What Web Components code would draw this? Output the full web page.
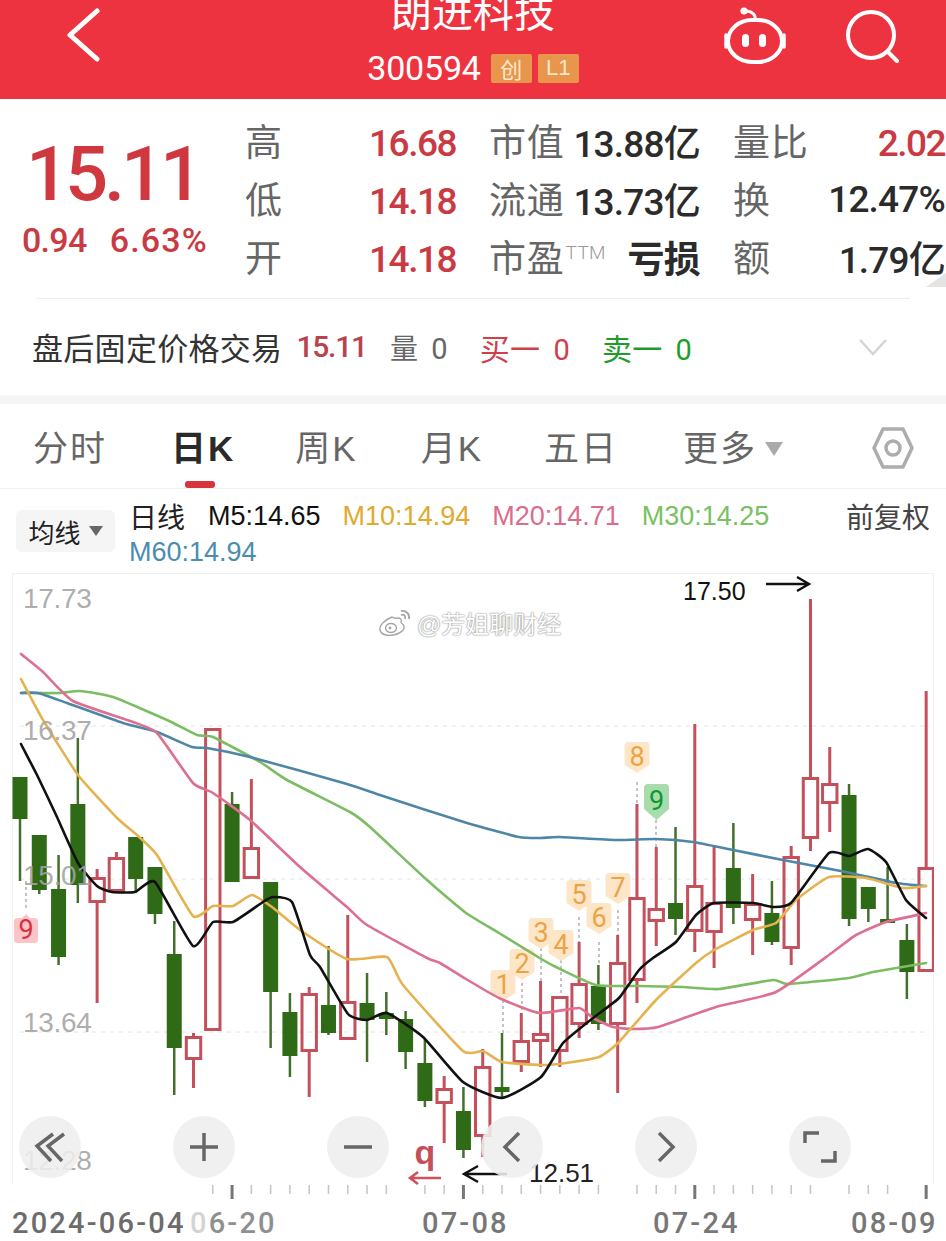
<!DOCTYPE html>
<html lang="zh">
<head>
<meta charset="utf-8">
<title>朗进科技 300594</title>
<style>
html, body { margin: 0; padding: 0; background: #fff; }
body { width: 946px; height: 1241px; overflow: hidden; font-family: "Liberation Sans", "Noto Sans CJK SC", sans-serif; }
sup { font: 300 19px/1 Roboto, sans-serif; color: #999; vertical-align: 13px; margin-left: 1px; letter-spacing: .3px; }
</style>
</head>
<body>
<stock-header>
  <span slot="name">朗进科技</span>
  <span slot="code">300594</span>
</stock-header>

<quote-panel>
  <quote-cell tone="up"><span slot="label">高</span>16.68</quote-cell>
  <quote-cell><span slot="label">市值</span>13.88亿</quote-cell>
  <quote-cell tone="up"><span slot="label">量比</span>2.02</quote-cell>
  <quote-cell tone="up"><span slot="label">低</span>14.18</quote-cell>
  <quote-cell><span slot="label">流通</span>13.73亿</quote-cell>
  <quote-cell><span slot="label">换</span>12.47%</quote-cell>
  <quote-cell tone="up"><span slot="label">开</span>14.18</quote-cell>
  <quote-cell strong><span slot="label">市盈<sup>TTM</sup></span>亏损</quote-cell>
  <quote-cell><span slot="label">额</span>1.79亿</quote-cell>
</quote-panel>

<after-hours></after-hours>

<period-tabs>
  <period-tab style="margin-right:1px">分时</period-tab>
  <period-tab active style="margin-right:-3px">日K</period-tab>
  <period-tab>周K</period-tab>
  <period-tab style="margin-right:-2px">月K</period-tab>
  <period-tab style="margin-right:2px">五日</period-tab>
  <period-tab menu>更多</period-tab>
</period-tabs>

<ma-legend></ma-legend>
<kline-chart></kline-chart>
<date-axis></date-axis>

<script>
const SANS = '"Liberation Sans", "Noto Sans CJK SC", sans-serif';
const NUM = 'Roboto, "Noto Sans CJK SC", sans-serif';

class StockHeader extends HTMLElement {
    constructor() {
        super();
        this.attachShadow({ mode: 'open' });
    }
    connectedCallback() {
        this.shadowRoot.innerHTML = `
            <style>
                :host { display: grid; grid-template-columns: 1fr auto 1fr; height: 99px; background: #ee3340; color: #fff; overflow: hidden; font-family: ${SANS}; }
                .left { padding: 8px 0 0 66px; }
                .mid { display: flex; flex-direction: column; align-items: center; }
                .name { font-size: 41px; line-height: 44px; margin-top: -9px; }
                .sub { display: flex; align-items: center; height: 32px; margin-top: 17px; }
                .code { font: 34px/32px Roboto, sans-serif; letter-spacing: -.2px; margin-right: 10px; }
                .tag { display: flex; align-items: center; justify-content: center; width: 41px; height: 29px; margin-right: 6px; background: #e9964d; color: #fbe7c9; font-size: 22px; border-radius: 2px; }
                .tag:last-child { margin-right: 0; }
                .right { display: flex; justify-content: flex-end; gap: 59px; padding: 6px 47px 0 0; }
                svg { display: block; fill: none; stroke: #fff; stroke-linecap: round; stroke-linejoin: round; }
            </style>
            <div class="left">
                <svg width="34" height="54" viewBox="0 0 34 54" stroke-width="5"><path d="M31 3 4 27l27 24"/></svg>
            </div>
            <div class="mid">
                <div class="name"><slot name="name"></slot></div>
                <div class="sub"><span class="code"><slot name="code"></slot></span><span class="tag">创</span><span class="tag">L1</span></div>
            </div>
            <div class="right">
                <svg width="62" height="58" viewBox="0 0 62 58" stroke-width="4">
                    <rect x="4" y="14" width="54" height="42" rx="24" ry="21"/>
                    <path d="M2 29v12M60 29v12" stroke-width="3.5"/>
                    <path d="M31 14c1-5-2-8-8-9" stroke-width="3"/>
                    <circle cx="20" cy="5" r="3.6" fill="#fff" stroke="none"/>
                    <rect x="18" y="28" width="7" height="13" rx="3.5" fill="#fff" stroke="none"/>
                    <rect x="35" y="28" width="7" height="13" rx="3.5" fill="#fff" stroke="none"/>
                </svg>
                <svg width="54" height="58" viewBox="0 0 54 58" stroke-width="4">
                    <circle cx="26" cy="29" r="23"/>
                    <path d="M43 46l9 9"/>
                </svg>
            </div>`;
    }
}

class QuoteCell extends HTMLElement {
    constructor() {
        super();
        this.attachShadow({ mode: 'open' });
    }
    connectedCallback() {
        const up = this.getAttribute('tone') === 'up';
        const strong = this.hasAttribute('strong');
        this.shadowRoot.innerHTML = `
            <style>
                :host { display: flex; justify-content: space-between; align-items: center; height: 58px; font-family: ${SANS}; }
                .l { font-size: 37px; color: #666; white-space: nowrap; margin: -7px 0 0 -2px; }
                ::slotted(span) { letter-spacing: .8px; }
                .v { font: ${strong ? 700 : 500} 37px ${NUM}; letter-spacing: ${up ? -1.5 : -.8}px; color: ${up ? '#c93a43' : '#2b2b2b'}; white-space: nowrap; margin-top: ${up ? 0 : -4}px; }
            </style>
            <span class="l"><slot name="label"></slot></span>
            <span class="v"><slot></slot></span>`;
    }
}

class QuotePanel extends HTMLElement {
    constructor() {
        super();
        this.attachShadow({ mode: 'open' });
    }
    connectedCallback() {
        this.shadowRoot.innerHTML = `
            <style>
                :host { display: block; position: relative; height: 199px; font-family: ${SANS}; }
                .top { display: flex; padding-top: 15px; }
                .price { width: 247px; flex: none; color: #d0383f; }
                .big { font: 500 76px/76px Roboto, sans-serif; letter-spacing: -4.2px; margin: 22px 0 0 26px; }
                .sub { display: flex; gap: 23px; font: 500 34px/40px Roboto, sans-serif; margin: 8px 0 0 22px; color: #c93a43; letter-spacing: -.7px; }
                .sub span:last-child { letter-spacing: 1.2px; }
                .grid { display: grid; grid-template-columns: 209px 209px 210px; column-gap: 35px; }
                .rule { height: 1px; background: #eeeeee; margin: 10px 36px 0 36px; }
                .corner { position: absolute; right: 0; bottom: 11px; width: 0; height: 0; border-left: 20px solid transparent; border-bottom: 14px solid #e4e4e4; }
            </style>
            <div class="top">
                <div class="price">
                    <div class="big">15.11</div>
                    <div class="sub"><span>0.94</span><span>6.63%</span></div>
                </div>
                <div class="grid"><slot></slot></div>
            </div>
            <div class="rule"></div>
            <div class="corner"></div>`;
    }
}

class AfterHours extends HTMLElement {
    constructor() {
        super();
        this.attachShadow({ mode: 'open' });
    }
    connectedCallback() {
        this.shadowRoot.innerHTML = `
            <style>
                :host { display: flex; align-items: center; height: 106px; box-sizing: border-box; padding: 0 0 0 32px; border-bottom: 9px solid #f5f5f5; font: 31px ${SANS}; color: #333; letter-spacing: .3px; }
                span { white-space: nowrap; }
                b { font: 400 29px Roboto, sans-serif; letter-spacing: -.8px; margin-left: 13px; }
                .p { color: #b9434d; font: 500 30px Roboto, sans-serif; letter-spacing: -1.2px; margin-left: 14px; }
                .q { color: #666; font-size: 28px; margin-left: 23px; }
                .r { color: #d0404b; font-size: 30px; margin-left: 33px; }
                .g { color: #1f9d2c; font-size: 30px; margin-left: 33px; }
                svg { margin-left: auto; margin-right: 58px; display: block; }
            </style>
            <span>盘后固定价格交易</span>
            <span class="p">15.11</span>
            <span class="q">量<b>0</b></span>
            <span class="r">买一<b>0</b></span>
            <span class="g">卖一<b>0</b></span>
            <svg width="30" height="18" viewBox="0 0 30 18" fill="none" stroke="#d5d5d5" stroke-width="2.5"><path d="M2 2l13 14L28 2"/></svg>`;
    }
}

class PeriodTab extends HTMLElement {
    constructor() {
        super();
        this.attachShadow({ mode: 'open' });
    }
    connectedCallback() {
        const active = this.hasAttribute('active');
        const menu = this.hasAttribute('menu');
        this.shadowRoot.innerHTML = `
            <style>
                :host { display: flex; flex-direction: column; align-items: center; height: 84px; font: ${active ? 700 : 400} 35px ${SANS}; color: ${active ? '#2a2a2a' : '#666'}; letter-spacing: 2px; }
                .t { margin-top: 21px; line-height: 48px; display: flex; align-items: center; }
                .caret { width: 0; height: 0; margin-left: 8px; border: 9px solid transparent; border-top: 14px solid #aaa; border-bottom: 0; }
                .bar { width: 30px; height: 7px; margin: auto 6px 0 0; border-radius: 3px; background: ${active ? '#d8343f' : 'transparent'}; }
            </style>
            <div class="t"><slot></slot>${menu ? '<span class="caret"></span>' : ''}</div>
            <div class="bar"></div>`;
    }
}

class PeriodTabs extends HTMLElement {
    constructor() {
        super();
        this.attachShadow({ mode: 'open' });
    }
    connectedCallback() {
        this.shadowRoot.innerHTML = `
            <style>
                :host { display: flex; gap: 63px; height: 85px; box-sizing: border-box; padding-left: 33px; border-bottom: 1px solid #f0f0f0; }
                svg { margin: 22px 32px 0 auto; display: block; }
            </style>
            <slot></slot>
            <svg width="42" height="44" viewBox="0 0 42 44" fill="none" stroke="#adadad" stroke-width="3.5" stroke-linejoin="round">
                <path d="M11 3h20l9 19-9 19H11L2 22Z"/>
                <circle cx="21" cy="22" r="7"/>
            </svg>`;
    }
}

class MaLegend extends HTMLElement {
    constructor() {
        super();
        this.attachShadow({ mode: 'open' });
    }
    connectedCallback() {
        this.shadowRoot.innerHTML = `
            <style>
                :host { display: flex; height: 84px; padding: 9px 16px 0 16px; box-sizing: border-box; font: 27px ${SANS}; color: #222; }
                .drop { display: flex; align-items: center; justify-content: center; gap: 8px; flex: none; width: 99px; height: 42px; margin: 12px 14px 0 0; background: #f5f5f5; border-radius: 6px; font-size: 26px; }
                .drop i { width: 0; height: 0; border: 7px solid transparent; border-top: 10px solid #666; border-bottom: 0; }
                .rows { flex: 1; display: flex; flex-direction: column; }
                .row { display: flex; gap: 22px; height: 36px; align-items: center; white-space: nowrap; }
                .row .name { font-size: 28px; margin-right: 1px; }
                .m5 { color: #111; } .m10 { color: #e0a92f; } .m20 { color: #db6d8c; } .m30 { color: #79c162; } .m60 { color: #4a8db0; }
                .right { margin-left: auto; font-size: 28px; color: #444; }
            </style>
            <div class="drop">均线<i></i></div>
            <div class="rows">
                <div class="row">
                    <span class="name">日线</span>
                    <span class="m5">M5:14.65</span>
                    <span class="m10">M10:14.94</span>
                    <span class="m20">M20:14.71</span>
                    <span class="m30">M30:14.25</span>
                    <span class="right">前复权</span>
                </div>
                <div class="row"><span class="m60">M60:14.94</span></div>
            </div>`;
    }
}

// top, bottom, high, low (page y), 'u' red hollow / 'd' green solid
const CANDLES = [
    ['d',777,819,777,881],['d',835,890,835,894],['d',889,957,855,965],['d',804,885,738,903],
    ['u',877,903,869,1003],['u',857,892,852,892],['d',837,879,837,893],['d',867,914,867,924],
    ['d',954,1048,921,1095],['u',1036,1060,1033,1088],['u',728,1031,728,1031],['d',804,882,792,882],
    ['u',847,879,779,879],['d',882,992,882,1048],['d',1012,1056,993,1077],['u',993,1052,987,1097],
    ['d',1005,1033,946,1035],['u',1001,1040,915,1040],['d',1003,1020,973,1062],['d',1013,1019,992,1035],
    ['d',1019,1052,1011,1069],['d',1063,1101,1038,1107],['u',1088,1104,1076,1143],['d',1111,1150,1087,1158],
    ['u',1066,1137,1049,1157],['d',1087,1092,1033,1097],['u',1040,1063,1013,1072],['u',1033,1042,981,1067],
    ['u',996,1052,996,1067],['u',983,1025,942,1038],['d',986,1024,965,1030],['u',962,1025,935,1093],
    ['u',897,981,804,1003],['u',908,922,847,946],['d',903,919,827,935],['u',885,932,724,952],
    ['u',902,933,847,968],['d',868,908,823,924],['u',903,921,874,955],['d',913,942,881,945],
    ['u',856,949,846,965],['u',777,839,599,851],['u',783,804,747,832],['d',795,919,784,926],
    ['d',887,909,887,922],['d',919,923,867,923],['d',940,972,924,999],['u',867,972,691,972]
];

const MA_LINES = [
    ['#7cbc62', '21,693 60,693 80,691 113,697 167,720 197,735 213,737 260,762 287,780 350,812 370,827 427,880 466,913 499,933 543,960 556,967 596,985 639,986 683,987 719,989 773,980 788,984 849,978 873,972 926,963'],
    ['#4d86a6', '21,693 38,693 67,703 123,723 157,732 192,747 207,748 250,757 347,784 383,796 467,823 519,837 541,838 559,837 616,840 656,839 693,842 733,850 783,860 846,872 896,883 926,886'],
    ['#dd7090', '21,654 43,672 73,701 133,722 157,733 193,783 213,793 250,820 300,867 347,907 367,925 427,958 440,963 466,979 499,998 539,1013 579,1008 593,1018 613,1027 633,1029 658,1027 716,1007 776,992 833,952 856,935 886,922 926,913'],
    ['#e5b24f', '21,679 43,720 78,775 117,818 137,835 157,855 193,916 213,906 233,906 252,895 272,907 300,930 347,959 387,957 403,985 463,1051 483,1051 502,1062 541,1065 566,1063 599,1057 618,1043 656,1000 696,963 714,950 753,930 776,923 796,900 829,877 866,878 903,888 926,886'],
    ['#111', '21,744 38,777 57,817 78,863 97,886 112,892 135,892 155,882 193,946 213,922 233,922 263,902 273,897 292,902 310,955 320,967 348,1014 367,1020 387,1013 423,1037 463,1082 502,1098 541,1077 563,1043 593,1018 619,998 639,970 653,958 676,942 696,915 714,903 753,903 773,907 791,903 829,853 849,856 868,849 886,862 906,900 926,918']
];

// label, centre x, centre y, dash from, dash to
const MARKERS = [
    ['1',503,985,1000,1033],['2',522,964,983,1013],['3',541,933,948,981],['4',561,945,960,996],
    ['5',579,895,917,942],['6',599,918,942,965],['7',618,888,910,935],['8',637,757,782,804]
];

// light catmull-rom: rounds the corners a little, /12 so it doesn't overshoot
function smoothPath(str) {
    const p = str.split(' ').map(s => s.split(',').map(Number));
    let d = `M${p[0][0]} ${p[0][1]}`;
    for (let i = 0; i < p.length - 1; i++) {
        const a = p[i - 1] || p[i], b = p[i], c = p[i + 1], e = p[i + 2] || c;
        const c1x = b[0] + (c[0] - a[0]) / 12, c1y = b[1] + (c[1] - a[1]) / 12;
        const c2x = c[0] - (e[0] - b[0]) / 12, c2y = c[1] - (e[1] - b[1]) / 12;
        d += `C${c1x.toFixed(1)} ${c1y.toFixed(1)} ${c2x.toFixed(1)} ${c2y.toFixed(1)} ${c[0]} ${c[1]}`;
    }
    return d;
}

class KlineChart extends HTMLElement {
    constructor() {
        super();
        this.attachShadow({ mode: 'open' });
    }
    candle(c, i) {
        const x = 20 + 19.28 * i;
        const [kind, top, bottom, high, low] = c;
        if (kind === 'd') {
            return `<path d="M${x} ${high}V${low}" stroke="#42702c" stroke-width="2.5"/>
                <rect x="${x - 7.5}" y="${top}" width="15" height="${bottom - top}" fill="#2f6a17"/>`;
        }
        return `<path d="M${x} ${high}V${top}M${x} ${bottom}V${low}" stroke="#c4505c" stroke-width="3"/>
            <rect x="${x - 7.2}" y="${top + 1.5}" width="14.4" height="${bottom - top - 3}" fill="none" stroke="#c4505c" stroke-width="3"/>`;
    }
    marker(m, bg, fg) {
        const [t, x, y, d1, d2] = m;
        return `<path d="M${x} ${d1}V${d2}" stroke="#888" stroke-width="1" stroke-dasharray="3 3"/>
            <path d="M${x - 12.5} ${y - 11}q0-4 4-4h17q4 0 4 4v19l-12.5 8-12.5-8Z" fill="${bg}"/>
            <text x="${x}" y="${y + 9}" text-anchor="middle" font-size="27" fill="${fg}" font-family="Roboto, sans-serif">${t}</text>`;
    }
    connectedCallback() {
        const grids = [726, 879, 1032].map(y => `<path d="M20 ${y}H930" stroke="#e4e4e4" stroke-width="1" stroke-dasharray="4 5"/>`).join('');
        const labels = [['17.73', 608], ['16.37', 740], ['15.01', 885], ['13.64', 1032], ['12.28', 1170]]
            .map(l => `<text x="23" y="${l[1]}" font-size="28" letter-spacing="-.3" fill="#a3a3a3" fill-opacity=".9">${l[0]}</text>`).join('');
        const candles = CANDLES.map((c, i) => this.candle(c, i)).join('');
        const lines = MA_LINES.map(l => `<path d="${smoothPath(l[1])}" fill="none" stroke="${l[0]}" stroke-width="2.6" stroke-linejoin="round" stroke-linecap="round"/>`).join('');
        const markers = MARKERS.map(m => this.marker(m, '#fde5c8', '#eba445')).join('');
        this.shadowRoot.innerHTML = `
            <style>
                :host { display: block; position: relative; width: 922px; height: 612px; margin-left: 12px; box-sizing: border-box; font-family: ${SANS}; }
                svg.plot { display: block; }
                .mark { position: absolute; left: 366px; top: 32px; display: flex; align-items: center; gap: 5px; font-size: 24px; color: #fff; text-shadow: 0 0 2px #8a8a8a, 0 0 1px #8a8a8a; white-space: nowrap; }
                .btns { position: absolute; left: 7px; top: 543px; display: flex; gap: 92px; }
                .btn { width: 62px; height: 62px; border-radius: 50%; background: rgba(238,238,238,.88); display: flex; align-items: center; justify-content: center; }
                .btn svg { display: block; fill: none; stroke: #666; stroke-width: 3.5; }
            </style>
            <svg class="plot" width="922" height="612" viewBox="12 573 922 612" font-family='"Liberation Sans", sans-serif'>
                <path d="M12.5 1185V573.5H933.5V1185" fill="none" stroke="#f1f1f1" stroke-width="1"/>
                <path d="M12 1185.5H934" stroke="#eeeeee" stroke-width="1"/>
                ${grids}
                ${markers}
                <path d="M26 881V910" stroke="#888" stroke-width="1" stroke-dasharray="3 3"/>
                <path d="M14 921q0-3 4-3h4l4-4 4 4h4q4 0 4 3v19q0 3-4 3H18q-4 0-4-3Z" fill="#fbc4c7"/>
                <text x="26" y="939" text-anchor="middle" font-size="27" fill="#d8323e" font-family="Roboto, sans-serif">9</text>
                <path d="M656 820V847" stroke="#888" stroke-width="1" stroke-dasharray="3 3"/>
                <path d="M644 788q0-4 4-4h17q4 0 4 4v21l-12.5 11-12.5-11Z" fill="#a9dcad"/>
                <text x="656.5" y="810" text-anchor="middle" font-size="27" fill="#0a9a2e" font-family="Roboto, sans-serif">9</text>
                ${candles}
                ${lines}
                ${labels}
                <text x="683" y="600" font-size="25" fill="#111">17.50</text>
                <path d="M766 584H809M797 577l12 7-12 7" fill="none" stroke="#111" stroke-width="2.4"/>
                <text x="425" y="1164" text-anchor="middle" font-size="34" font-weight="700" fill="#c4505c">q</text>
                <path d="M441 1178H411M418 1172l-8 6 8 6" fill="none" stroke="#d0505c" stroke-width="2.6"/>
                <path d="M507 1174H465M478 1166l-14 8 14 8" fill="none" stroke="#111" stroke-width="2.4"/>
                <text x="529" y="1182" font-size="26" fill="#222">12.51</text>
            </svg>
            <div class="mark">
                <svg width="34" height="28" viewBox="0 0 34 28" fill="#fff" stroke="#a5a5a5" stroke-width="1.4">
                    <path d="M14 8C6 11 1 17 2 21c1 5 8 6 13 5 7-1 12-5 11-9-1-2-3-3-3-4 1-3-1-4-3-4-2 0-4 1-6-1Z"/>
                    <ellipse cx="13" cy="19" rx="5.5" ry="4.5"/>
                    <circle cx="12" cy="19" r="1.4" fill="#a5a5a5" stroke="none"/>
                    <path d="M23 2c5-1 9 3 8 8M23 6c3-1 5 1 4 4" fill="none" stroke-width="1.8"/>
                </svg>
                <span>@芳姐聊财经</span>
            </div>
            <div class="btns">
                <div class="btn"><svg width="34" height="34" viewBox="0 0 34 34"><path d="M20 4 4 16l14 15M31 4 15 16l14 15"/></svg></div>
                <div class="btn"><svg width="32" height="32" viewBox="0 0 32 32"><path d="M16 2v28M2 16h28"/></svg></div>
                <div class="btn"><svg width="32" height="32" viewBox="0 0 32 32"><path d="M2 16h28"/></svg></div>
                <div class="btn"><svg width="20" height="32" viewBox="0 0 20 32"><path d="M17 2 3 16l14 14"/></svg></div>
                <div class="btn"><svg width="20" height="32" viewBox="0 0 20 32"><path d="M3 2l14 14L3 30"/></svg></div>
                <div class="btn"><svg width="34" height="34" viewBox="0 0 34 34"><path d="M2 13V3h14M32 21v10H18"/></svg></div>
            </div>`;
    }
}

class DateAxis extends HTMLElement {
    constructor() {
        super();
        this.attachShadow({ mode: 'open' });
    }
    connectedCallback() {
        const major = [11, 23, 35, 47];
        const skip = [20, 31, 42, 46];
        let ticks = '';
        for (let i = 10; i < 48; i++) {
            if (skip.includes(i)) continue;
            const x = 20 + 19.28 * i;
            ticks += major.includes(i)
                ? `<path d="M${x} 0V14" stroke="#777" stroke-width="3"/>`
                : `<path d="M${x} 0V9" stroke="#c4c4c4" stroke-width="1.5"/>`;
        }
        this.shadowRoot.innerHTML = `
            <style>
                :host { display: block; height: 55px; }
                svg { display: block; }
                .row { display: flex; padding-left: 12px; margin-top: 6px; font: 500 29px/35px Roboto, sans-serif; letter-spacing: 2.2px; color: #777; white-space: nowrap; }
                .a { color: #6c6c6c; width: 178px; }
                .b { width: 232px; color: #8f8f8f; }
                .b i { font-style: normal; color: #d4d4d4; }
                .c { width: 231px; }
                .d { width: 198px; }
            </style>
            <svg width="946" height="15" viewBox="0 0 946 15">${ticks}</svg>
            <div class="row">
                <span class="a">2024-06-04</span>
                <span class="b"><i>0</i>6-20</span>
                <span class="c">07-08</span>
                <span class="d">07-24</span>
                <span>08-09</span>
            </div>`;
    }
}

customElements.define('stock-header', StockHeader);
customElements.define('quote-cell', QuoteCell);
customElements.define('quote-panel', QuotePanel);
customElements.define('after-hours', AfterHours);
customElements.define('period-tab', PeriodTab);
customElements.define('period-tabs', PeriodTabs);
customElements.define('ma-legend', MaLegend);
customElements.define('kline-chart', KlineChart);
customElements.define('date-axis', DateAxis);
</script>
</body>
</html>
